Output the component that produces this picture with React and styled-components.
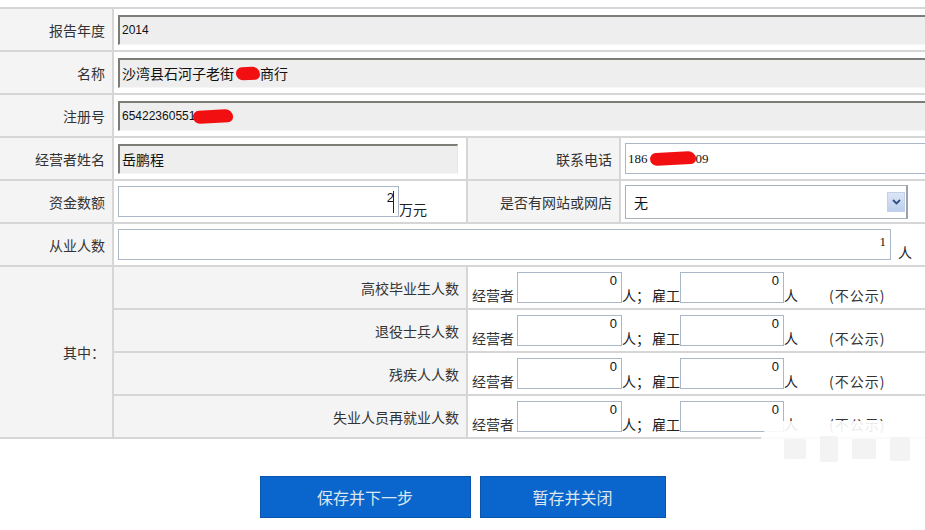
import styled, { createGlobalStyle } from 'styled-components';

const GlobalStyle = createGlobalStyle`
  html, body {
    margin: 0;
    padding: 0;
    background: #fff;
    overflow: hidden;
  }
  body {
    font-family: "Noto Sans CJK SC", "Noto Sans", sans-serif;
    font-size: 14px;
    color: #333;
  }
`;

const Page = styled.div`
  position: relative;
  width: 925px;
  height: 530px;
  overflow: hidden;
  padding-top: 7px;
  box-sizing: border-box;
`;

const FormTable = styled.table`
  width: 990px;
  border-collapse: collapse;
  table-layout: fixed;
`;

const Row = styled.tr`
  height: 43px;
`;

const Label = styled.td`
  border: 2px solid #d6d6d6;
  border-left: ${(p) => (p.$first ? 'none' : '2px solid #d6d6d6')};
  background: #f4f4f4;
  text-align: right;
  padding: 0 7px 0 0;
  white-space: nowrap;
  color: #333;
  line-height: 18px;
`;

const Data = styled.td`
  border: 2px solid #d6d6d6;
  background: #fff;
  padding: 0 0 0 4px;
  white-space: nowrap;
`;

const Line = styled.div`
  display: flex;
  align-items: flex-end;
  line-height: 16px;
`;

const ReadBox = styled.div`
  width: ${(p) => p.$w}px;
  height: 30px;
  box-sizing: border-box;
  border-top: 2px solid #7d7d78;
  border-left: 2px solid #7d7d78;
  border-right: 1px solid #e6e6e6;
  border-bottom: 1px solid #f6f6f6;
  background: #eeeeee;
  padding: 0 2px;
  display: flex;
  align-items: center;
  color: #111;
  font-size: 14px;
`;

const WriteBox = styled.div`
  width: ${(p) => p.$w}px;
  height: 31px;
  box-sizing: border-box;
  border: 1px solid #a9b7c6;
  background: #fff;
  padding: 0 2px;
  display: flex;
  align-items: center;
  color: #111;
`;

const NumInput = styled.input`
  width: ${(p) => p.$w}px;
  height: 31px;
  box-sizing: border-box;
  border: 1px solid #a9b7c6;
  background: #fff;
  margin: 0;
  padding: 0 4px ${(p) => p.$lift}px 0;
  text-align: right;
  font-family: ${(p) => (p.$serif ? '"Liberation Serif"' : '"Liberation Sans"')}, serif;
  font-size: 13px;
  color: #111;
  outline: none;
`;

const Digits = styled.span`
  font-family: ${(p) => (p.$serif ? '"Liberation Serif"' : '"Liberation Sans"')}, sans-serif;
  font-size: ${(p) => (p.$serif ? 13 : 12)}px;
  color: #111;
`;

const Redact = styled.span`
  display: inline-block;
  width: ${(p) => p.$w}px;
  height: 13px;
  margin-left: ${(p) => p.$ml || 0}px;
  background: #f20f12;
  border-radius: 7px 9px 6px 8px;
  transform: rotate(-3deg);
`;

const Suffix = styled.span`
  margin-left: ${(p) => p.$ml || 0}px;
  color: #222;
`;

const Cursor = styled.span`
  display: inline-block;
  width: 1px;
  height: 22px;
  background: #222;
  margin-left: -6px;
  margin-right: 5px;
  align-self: center;
`;

const SelectBox = styled.div`
  width: 283px;
  height: 34px;
  box-sizing: border-box;
  border: 1px solid #a9b0b8;
  border-right: 2px solid #9aa2aa;
  display: flex;
  align-items: center;
  justify-content: space-between;
  padding: 0 1px 0 8px;
  color: #111;
`;

const ArrowBox = styled.span`
  width: 16px;
  height: 18px;
  display: flex;
  align-items: center;
  justify-content: center;
  background: linear-gradient(#dce6f6, #bccfee);
  border: 1px solid #c2d0e8;
`;

const SubLabel = styled(Label)`
  border-left: 2px solid #d6d6d6;
`;

const Note = styled.span`
  margin-left: 31px;
  color: #333;
  letter-spacing: 1px;
`;

const Actions = styled.div`
  display: flex;
  justify-content: center;
  gap: 9px;
  margin-top: 37px;
`;

const Button = styled.button`
  width: ${(p) => p.$w}px;
  height: 42px;
  background: #0a66cc;
  border: 1px solid #0b56aa;
  color: #dce6ef;
  font-family: "Noto Sans CJK SC", sans-serif;
  font-size: 16px;
  cursor: pointer;
  padding: 0;
`;

const Watermark = styled.div`
  position: absolute;
  left: 760px;
  top: 421px;
  width: 170px;
  height: 56px;
  background: rgba(255, 255, 255, 0.9);
  border-radius: 24px 0 0 24px;
  display: flex;
  align-items: center;
  gap: 14px;
  padding-left: 24px;
  box-sizing: border-box;
`;

const Tile = styled.span`
  width: ${(p) => p.$w}px;
  height: ${(p) => p.$h}px;
  background: #f3f3f3;
  border-radius: 2px;
`;

function SubRow({ label, first }) {
  return (
    <Row>
      {first && (
        <Label $first rowSpan={4}>
          其中：
        </Label>
      )}
      <SubLabel>{label}</SubLabel>
      <Data colSpan={2}>
        <Line>
          <span>经营者</span>
          <NumInput $w={105} $lift={14} value="0" readOnly style={{ marginLeft: 3 }} />
          <Suffix>人；</Suffix>
          <Suffix $ml={2}>雇工</Suffix>
          <NumInput $w={104} $lift={14} value="0" readOnly />
          <Suffix>人</Suffix>
          <Note>(不公示)</Note>
        </Line>
      </Data>
    </Row>
  );
}

export default function App() {
  return (
    <Page>
      <GlobalStyle />
      <FormTable>
        <colgroup>
          <col style={{ width: 113 }} />
          <col style={{ width: 354 }} />
          <col style={{ width: 153 }} />
          <col />
        </colgroup>
        <tbody>
          <Row>
            <Label $first>报告年度</Label>
            <Data colSpan={3}>
              <ReadBox $w={850}>
                <Digits>2014</Digits>
              </ReadBox>
            </Data>
          </Row>
          <Row>
            <Label $first>名称</Label>
            <Data colSpan={3}>
              <ReadBox $w={850}>
                沙湾县石河子老街
                <Redact $w={24} $ml={2} />
                商行
              </ReadBox>
            </Data>
          </Row>
          <Row>
            <Label $first>注册号</Label>
            <Data colSpan={3}>
              <ReadBox $w={850}>
                <Digits>65422360551</Digits>
                <Redact $w={40} $ml={-2} />
              </ReadBox>
            </Data>
          </Row>
          <Row>
            <Label $first>经营者姓名</Label>
            <Data>
              <ReadBox $w={340}>岳鹏程</ReadBox>
            </Data>
            <Label>联系电话</Label>
            <Data>
              <WriteBox $w={330}>
                <Digits $serif>186</Digits>
                <Redact $w={46} $ml={2} />
                <Digits $serif>09</Digits>
              </WriteBox>
            </Data>
          </Row>
          <Row>
            <Label $first>资金数额</Label>
            <Data>
              <Line>
                <NumInput $w={281} $lift={8} value="2" readOnly />
                <Cursor />
                <Suffix>万元</Suffix>
              </Line>
            </Data>
            <Label>是否有网站或网店</Label>
            <Data>
              <SelectBox>
                <span>无</span>
                <ArrowBox>
                  <svg width="9" height="6" viewBox="0 0 9 6">
                    <path d="M1 1 L4.5 4.5 L8 1" fill="none" stroke="#2e4f86" strokeWidth="1.8" />
                  </svg>
                </ArrowBox>
              </SelectBox>
            </Data>
          </Row>
          <Row>
            <Label $first>从业人数</Label>
            <Data colSpan={3}>
              <Line>
                <NumInput $w={773} $lift={6} $serif value="1" readOnly />
                <Suffix $ml={7}>人</Suffix>
              </Line>
            </Data>
          </Row>
          <SubRow first label="高校毕业生人数" />
          <SubRow label="退役士兵人数" />
          <SubRow label="残疾人人数" />
          <SubRow label="失业人员再就业人数" />
        </tbody>
      </FormTable>
      <Actions>
        <Button $w={211}>保存并下一步</Button>
        <Button $w={186}>暂存并关闭</Button>
      </Actions>
      <Watermark>
        <Tile $w={22} $h={20} />
        <Tile $w={18} $h={26} />
        <Tile $w={24} $h={20} />
        <Tile $w={20} $h={24} />
      </Watermark>
    </Page>
  );
}
